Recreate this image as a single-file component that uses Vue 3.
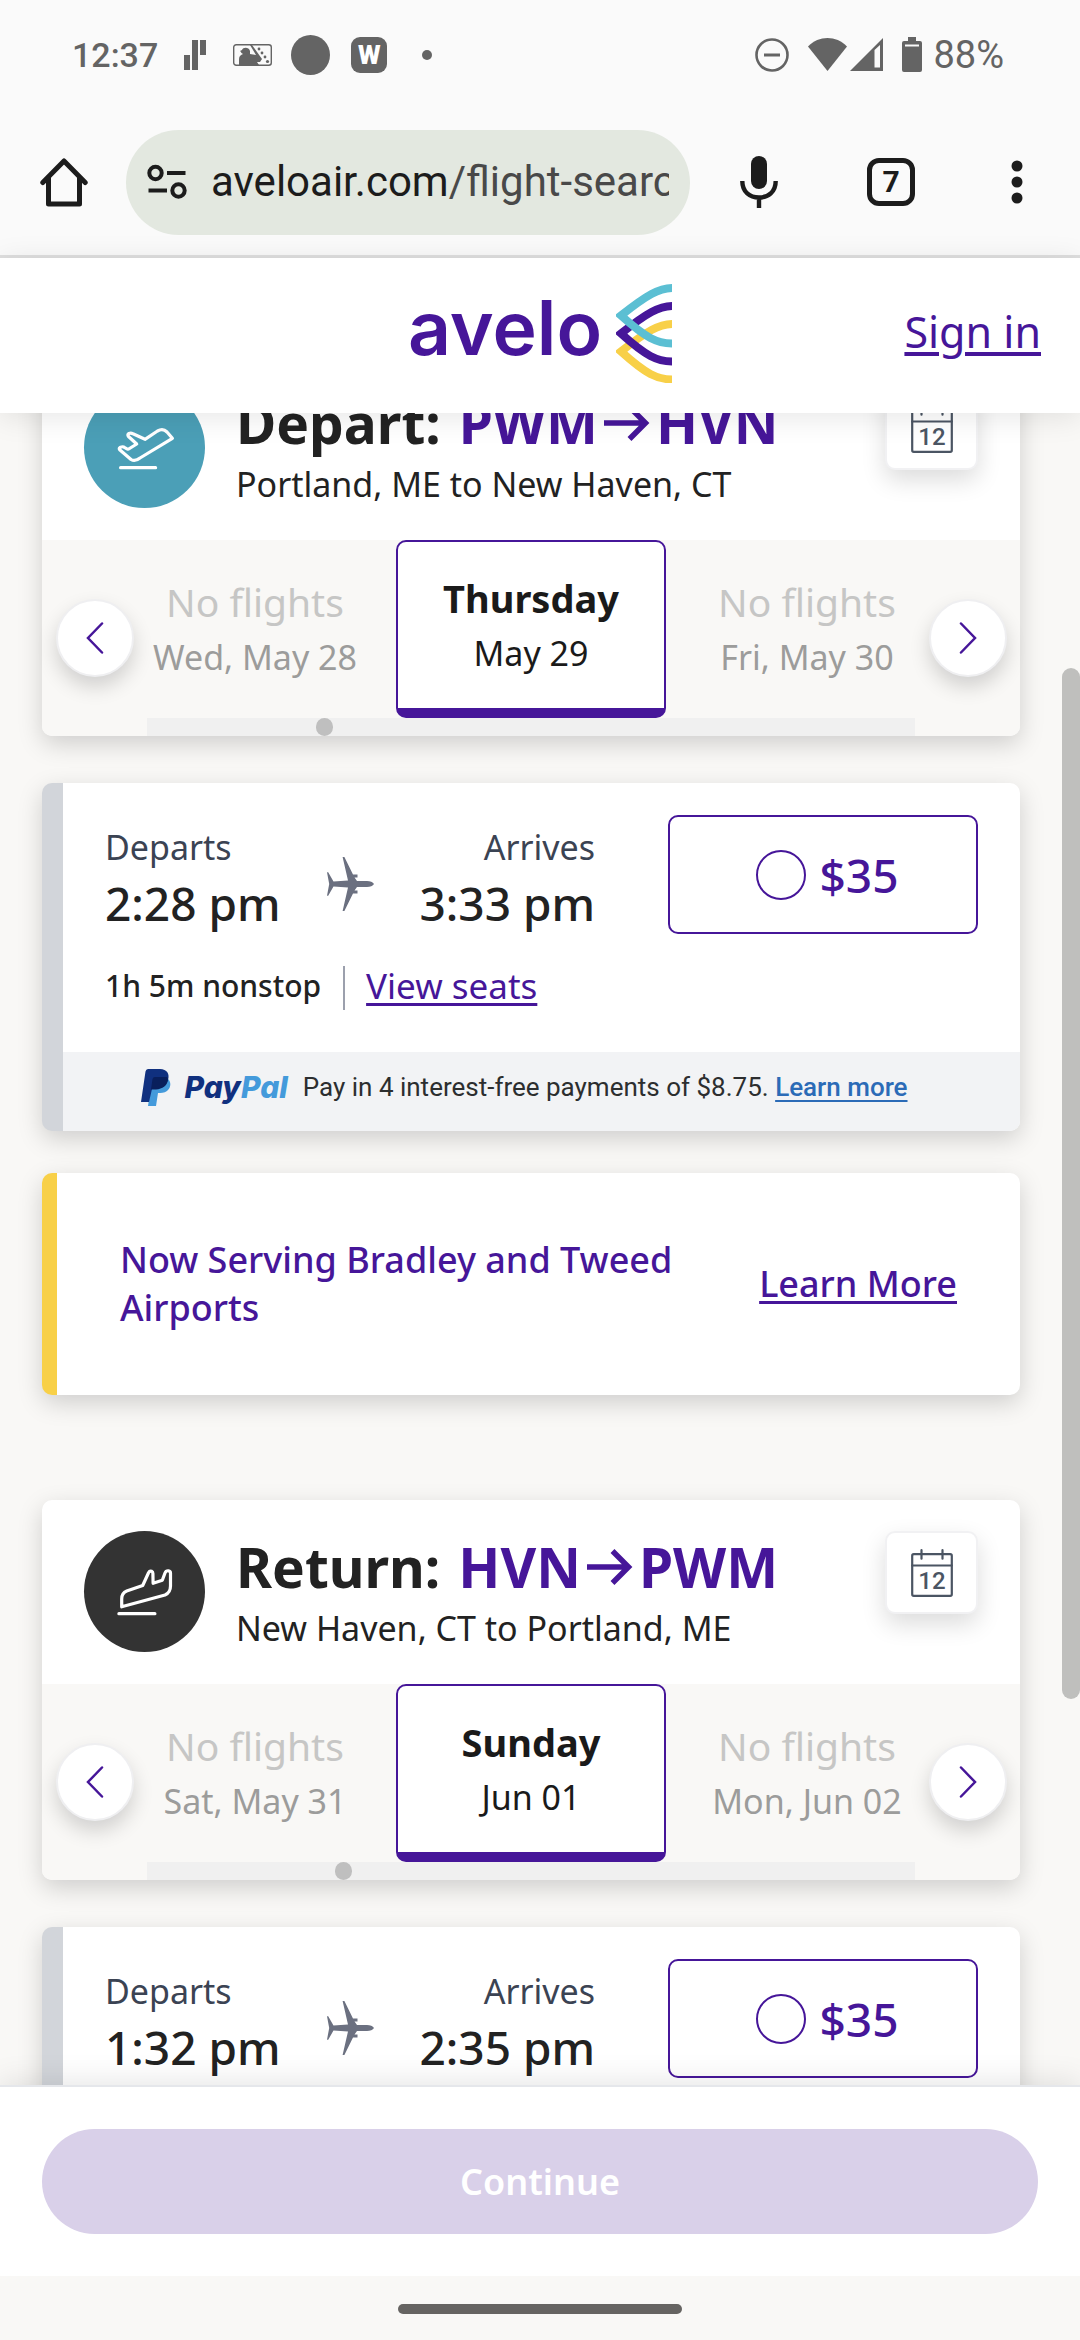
<script setup>
import { ref } from 'vue'

const trips = [
  {
    id: 'depart',
    label: 'Depart:',
    from: 'PWM',
    to: 'HVN',
    cities: 'Portland, ME to New Haven, CT',
    days: [
      { title: 'No flights', date: 'Wed, May 28' },
      { title: 'Thursday', date: 'May 29', selected: true },
      { title: 'No flights', date: 'Fri, May 30' }
    ],
    thumb: 22,
    flight: { departs: '2:28 pm', arrives: '3:33 pm', duration: '1h 5m nonstop', price: '$35', installment: '$8.75' },
    notice: 'Now Serving Bradley and Tweed Airports'
  },
  {
    id: 'return',
    label: 'Return:',
    from: 'HVN',
    to: 'PWM',
    cities: 'New Haven, CT to Portland, ME',
    days: [
      { title: 'No flights', date: 'Sat, May 31' },
      { title: 'Sunday', date: 'Jun 01', selected: true },
      { title: 'No flights', date: 'Mon, Jun 02' }
    ],
    thumb: 24.5,
    flight: { departs: '1:32 pm', arrives: '2:35 pm', duration: '1h 3m nonstop', price: '$35', installment: '$8.75' }
  }
]

const chosen = ref({ depart: null, return: null })
</script>

<template>
  <div class="screen">
    <div class="status">
      <span class="clock">12:37</span>
      <svg class="s-bars" width="22" height="30" viewBox="0 0 22 30"><path d="M0 15h6v15H0zM8 0h6v30H8zM16 0h6v15h-6z" /></svg>
      <svg class="s-ball" width="39" height="22" viewBox="0 0 39 22">
        <rect x="0.7" y="0.7" width="37.6" height="20.6" rx="2.5" fill="none" stroke="#646464" stroke-width="1.4" />
        <path d="M6 21v-6c0-3 2-4 4-5-2-1-2-2-2-2l-1-1 2-1c1-3 7-3 8 1v3l6 1-6-10h2l10 14-2 3h-3l2 3z" />
        <circle cx="26" cy="5" r="1.4" /><circle cx="29" cy="9" r="1.4" /><circle cx="32" cy="13" r="1.4" /><circle cx="34.5" cy="17.5" r="1.6" />
      </svg>
      <svg class="s-disc" width="39" height="40" viewBox="0 0 39 40"><ellipse cx="19.5" cy="20" rx="19.5" ry="20" /></svg>
      <span class="s-w">W</span>
      <svg class="s-dot" width="10" height="10" viewBox="0 0 10 10"><circle cx="5" cy="5" r="5" /></svg>
      <span class="spacer"></span>
      <svg class="s-dnd" width="34" height="34" viewBox="0 0 34 34"><circle cx="17" cy="17" r="15.5" fill="none" stroke="#646464" stroke-width="2.6" /><path d="M9 15.5h16v3H9z" /></svg>
      <svg class="s-wifi" width="39" height="33" viewBox="0 0 39 33"><path d="M0 8.500C11-2.800 28-2.800 39 8.500L19.500 33z" /></svg>
      <svg class="s-cell" width="33" height="33" viewBox="0 0 33 33"><path fill-rule="evenodd" d="M33 0v33H0zM24.500 12v17.500H30V7z" /></svg>
      <svg class="s-batt" width="20" height="35" viewBox="0 0 20 35"><path fill-rule="evenodd" d="M6 0h8v4h4a2 2 0 0 1 2 2v27a2 2 0 0 1-2 2H2a2 2 0 0 1-2-2V6a2 2 0 0 1 2-2h4zM3 7.500v2h14v-2z" /></svg>
      <span class="pct">88%</span>
    </div>

    <div class="toolbar">
      <button class="tool" aria-label="Home">
        <svg width="48" height="49" viewBox="0 0 48 49" fill="none" stroke="#1c1c1c" stroke-width="5" stroke-linejoin="round" stroke-linecap="round"><path d="M2.800 24.500 24 3l21.200 21.500" /><path d="M8.500 20v26h31V20" /></svg>
      </button>
      <button class="omnibox">
        <svg width="40" height="36" viewBox="0 0 40 36" fill="none" stroke="#1c1c1c" stroke-width="4"><circle cx="8.500" cy="9" r="6.200" /><path d="M20 9h18.500M1.500 26.500H20" /><circle cx="31.500" cy="26.500" r="6.200" /></svg>
        <span class="url">aveloair.com<span class="path">/flight-search</span></span>
      </button>
      <button class="tool mic" aria-label="Voice search">
        <svg width="38" height="52" viewBox="0 0 38 52"><rect x="11" y="0" width="16" height="33" rx="8" fill="#1c1c1c" /><path d="M2.300 25c0 11 7.500 16.500 16.700 16.500S35.700 36 35.700 25M19 41v11" fill="none" stroke="#1c1c1c" stroke-width="4.400" /></svg>
      </button>
      <button class="tool tabs" aria-label="Tabs"><span>7</span></button>
      <button class="tool more" aria-label="More options">
        <svg width="12" height="44" viewBox="0 0 12 44"><circle cx="6" cy="6" r="5.500" /><circle cx="6" cy="22" r="5.500" /><circle cx="6" cy="38" r="5.500" /></svg>
      </button>
    </div>

    <div class="page">
      <header class="site">
        <a class="logo" href="#" aria-label="Avelo home">
          <span class="word">avelo</span>
          <svg width="56" height="99" viewBox="0 0 56 99" fill="none" stroke-width="8">
            <path stroke="#f8d048" d="M57 40C43 40 31 47 5 67.500C30 90 41 95.500 57 95.500" />
            <path stroke="#461699" d="M57 22C43 22 31 29 5 49.500C30 72 41 77.500 57 77.500" />
            <path stroke="#5bbfd3" d="M57 4C43 4 31 11 5 31.500C30 54 41 59.500 57 59.500" />
          </svg>
        </a>
        <a class="signin" href="#">Sign in</a>
      </header>

      <main>
        <div class="content">
          <section v-for="trip in trips" :key="trip.id" class="trip">
            <div class="card search">
              <div class="head">
                <span class="badge" :class="trip.id">
                  <svg width="64" height="48" viewBox="0 0 64 48" fill="none" stroke="#fff" stroke-width="3.200" stroke-linecap="round" stroke-linejoin="round">
                    <path v-if="trip.id === 'depart'" d="M7 23.500q3-1.500 4.500 0l2 1.200q1.500.8 3-.2L23.700 20l-8.200-7.500q-1.500-2 .5-3 2-.8 4 .3L32 15.300 44.500 7q5.500-3 9.500 1l5.400 6.300L27 34q-5 4-9 1.500L7 26q-1.500-1.500 0-2.500zM7.600 43.700h35" />
                    <path v-else d="M8.700 38.800V31q0-6 5-8l16-5.500L35.200 5.500q1.200-3 3.500-2.200 1.200.5 1.200 2.200l.2 9.800 9.200-3L52 5q1-2.500 3.500-2.200 2 .3 2 2.200v13q0 6.500-5.500 9zM5.900 45.700h36" />
                  </svg>
                </span>
                <div class="titles">
                  <h2>{{ trip.label }}
                    <span class="route">{{ trip.from }}
                      <svg width="46" height="36" viewBox="0 0 46 36" fill="none" stroke="#461699" stroke-width="5.500"><path d="M0 18h42M25.500 2 41.500 18l-16 16" /></svg>
                      {{ trip.to }}</span>
                  </h2>
                  <p>{{ trip.cities }}</p>
                </div>
                <button class="calendar" aria-label="Open calendar">
                  <svg width="42" height="48" viewBox="0 0 42 48" fill="none" stroke="#4b5563" stroke-width="2.200" stroke-linecap="round">
                    <rect x="1.200" y="5.200" width="39.600" height="41.600" rx="1.500" /><path d="M1.200 16.500h39.600M10.500 1.200v8.500M31.500 1.200v8.500" />
                    <text x="21" y="40" text-anchor="middle" stroke="none" fill="#4b5563">12</text>
                  </svg>
                </button>
              </div>
              <div class="dates">
                <button class="round" aria-label="Earlier dates"><svg width="18" height="32" viewBox="0 0 18 32"><path d="M16 1.500 2 16l14 14.500" /></svg></button>
                <div class="window">
                  <div class="strip">
                    <button v-for="day in trip.days" :key="day.date" class="day" :class="{ selected: day.selected }">
                      <span class="title">{{ day.title }}</span>
                      <span class="date">{{ day.date }}</span>
                    </button>
                  </div>
                  <div class="track"><span class="thumb" :style="{ marginLeft: trip.thumb + '%' }"></span></div>
                </div>
                <button class="round" aria-label="Later dates"><svg width="18" height="32" viewBox="0 0 18 32"><path d="m2 1.500 14 14.500L2 30.500" /></svg></button>
              </div>
            </div>

            <article class="card flight">
              <div class="summary">
                <div class="times">
                  <div><span class="when">Departs</span><span class="hour">{{ trip.flight.departs }}</span></div>
                  <svg width="47" height="54" viewBox="0 0 47 54" fill="#6b7080"><path d="M47 27c-1-2-4-2.800-7-3H30l-2.500-3.500h3v-3H26L17.400 0h-1.800L21 23.500 6.500 24.500 1.200 15.300H0L2.200 27 0 38.700h1.200l5.300-9.200 14.500 1L15.600 54h1.800L26 36.500h4.500v-3h-3L30 30h10c3-.2 6-1 7-3z" /></svg>
                  <div class="right"><span class="when">Arrives</span><span class="hour">{{ trip.flight.arrives }}</span></div>
                </div>
                <label class="price"><input v-model="chosen[trip.id]" type="radio" :name="trip.id" :value="trip.flight.price" />{{ trip.flight.price }}</label>
              </div>
              <div class="details">
                <span class="duration">{{ trip.flight.duration }}</span>
                <a href="#">View seats</a>
              </div>
              <div class="paypal">
                <svg width="30" height="37" viewBox="0 0 30 37"><path fill="#449adb" d="M27 10c3.500 3 3 9-1 12-3 2-6 2-9 2l-2 13H7l4-27z" /><path fill="#10307f" d="M7 0h12c7 0 10 5 8 11-2 7-8 9-16 9l-3 13H0L4.500 2.500Q5 0 7 0z" /><path fill="#091f5c" d="M11.500 10q.4-2 2.500-2h12c1 1 1.200 3 .4 5-2 6-8 8-16.400 7.500z" /></svg>
                <span class="brand">Pay<span>Pal</span></span>
                <span class="offer">Pay in 4 interest-free payments of {{ trip.flight.installment }}. <a href="#">Learn more</a></span>
              </div>
            </article>

            <aside v-if="trip.notice" class="card notice">
              <p>{{ trip.notice }}</p>
              <a href="#">Learn More</a>
            </aside>
          </section>
        </div>
      </main>

      <div class="scrollbar"></div>
    </div>

    <div class="footer"><button disabled>Continue</button></div>
    <div class="gesture"><span></span></div>
  </div>
</template>

<style>
body { background: #f9f8f6; }
</style>

<style scoped>
* { box-sizing: border-box; }
button { padding: 0; border: 0; background: none; font: inherit; color: inherit; }
svg { display: block; flex: none; }
p, h2 { margin: 0; }

.screen {
  display: flex;
  flex-direction: column;
  height: 100vh;
  overflow: hidden;
  font-family: "Noto Sans", "Open Sans", sans-serif;
  color: #222;
}

.status {
  display: flex;
  flex: none;
  align-items: center;
  height: 109px;
  padding: 0 76px 0 72px;
  background: #fafafa;
  color: #646464;
  fill: #646464;
  font: 500 38px/40px Roboto, sans-serif;
}
.clock { font-size: 34px; }
.s-bars { margin-left: 26px; }
.s-ball { margin-left: 27px; }
.s-disc { margin-left: 19px; }
.s-w {
  width: 36px;
  margin-left: 21px;
  border-radius: 9px;
  background: #646464;
  color: #fff;
  font-size: 26px;
  font-weight: 900;
  line-height: 36px;
  text-align: center;
}
.s-dot { margin-left: 35px; }
.spacer { flex: 1; }
.s-wifi { margin-left: 19px; }
.s-cell { margin-left: 3px; }
.s-batt { margin-left: 19px; }
.pct { margin-left: 11px; font-weight: 400; }

.toolbar {
  display: flex;
  flex: none;
  align-items: center;
  height: 149px;
  padding: 0 57px 0 40px;
  border-bottom: 3px solid #dfdfdf;
  background: #fafafa;
}
.omnibox {
  display: flex;
  flex: 1;
  align-items: center;
  gap: 24px;
  min-width: 0;
  height: 105px;
  margin: 0 50px 0 38px;
  padding: 0 21px;
  border-radius: 53px;
  background: #e3e8e0;
  font: 42px/60px Roboto, sans-serif;
  color: #1c1c1c;
}
.url { flex: 1; min-width: 0; overflow: hidden; white-space: nowrap; text-align: left; }
.path { color: #494949; }
.tabs {
  width: 48px;
  height: 48px;
  margin: 0 96px 0 89px;
  border: 5px solid #1c1c1c;
  border-radius: 12px;
  font: 700 30px/38px Roboto, sans-serif;
  color: #1c1c1c;
}
.more { fill: #1c1c1c; }

.page { position: relative; display: flex; flex: 1; flex-direction: column; min-height: 0; }
.site {
  position: relative;
  z-index: 2;
  display: grid;
  flex: none;
  grid-template-columns: 1fr auto 1fr;
  align-items: center;
  height: 155px;
  padding: 0 39px 4px;
  background: #fff;
  box-shadow: 0 4px 28px rgba(0, 0, 0, 0.1);
}
.logo { display: flex; grid-column: 2; align-items: center; gap: 14px; color: #461699; text-decoration: none; }
.word { padding-bottom: 12px; font: 600 75px/80px Inter, sans-serif; }
.signin {
  justify-self: end;
  padding-bottom: 4px;
  color: #461699;
  font-size: 43px;
  line-height: 60px;
  text-decoration-thickness: 4px;
  text-underline-offset: 4px;
}

main { flex: 1; min-height: 0; overflow: hidden; background: #f9f8f6; }
.content { display: flex; flex-direction: column; gap: 105px; margin: -57px 60px 0 42px; }
.card { border-radius: 10px; background: #fff; box-shadow: 0 8px 24px rgba(0, 0, 0, 0.17); }

.head { display: flex; align-items: flex-start; height: 184px; padding: 31px 42px 32px; }
.badge { display: flex; flex: none; align-items: center; justify-content: center; width: 121px; height: 121px; border-radius: 50%; }
.depart { background: #4b9fb7; }
.return { background: #333; }
.titles { flex: 1; min-width: 0; padding: 2px 0 0 31px; white-space: nowrap; }
h2 { display: flex; gap: 18px; font-size: 55px; font-weight: 700; line-height: 68px; }
.route { display: flex; align-items: center; gap: 6px; color: #461699; }
.titles p { font-size: 34px; line-height: 54px; }
.calendar {
  display: flex;
  flex: none;
  align-items: center;
  justify-content: center;
  width: 93px;
  height: 83px;
  border: 2px solid #f1f1f3;
  border-radius: 10px;
  background: #fff;
  box-shadow: 0 10px 24px rgba(0, 0, 0, 0.14);
}
.calendar text { font: 500 24px Roboto, sans-serif; }

.dates {
  display: grid;
  grid-template-columns: 105px 1fr 105px;
  align-items: center;
  justify-items: center;
  border-radius: 0 0 10px 10px;
  background: #f9f8f6;
}
.round {
  display: flex;
  align-items: center;
  justify-content: center;
  width: 78px;
  height: 78px;
  border: 2px solid #efeff1;
  border-radius: 50%;
  background: #fff;
  box-shadow: 0 10px 20px rgba(0, 0, 0, 0.16);
}
.round path { fill: none; stroke: #461699; stroke-width: 2.5; stroke-linecap: round; }
.window { width: 100%; overflow: hidden; }
.strip { display: flex; justify-content: center; gap: 6px; }
.day { display: flex; flex: none; flex-direction: column; align-items: center; width: 270px; height: 178px; padding-top: 32px; color: #9c9c9b; }
.title { font-size: 39px; line-height: 60px; color: #c6c6c5; }
.date { font-size: 34px; line-height: 50px; }
.selected { padding-top: 26px; border: 2px solid #461699; border-bottom-width: 10px; border-radius: 10px; background: #fff; color: #1a1a1a; }
.selected .title { color: #1a1a1a; font-size: 38px; font-weight: 700; }
.track { display: flex; height: 18px; background: #f0f0f0; }
.thumb { width: 17px; border-radius: 9px; background: #bfbfbf; }

.flight { margin-top: 47px; overflow: hidden; border-left: 21px solid #d2d5da; }
.summary { display: flex; align-items: flex-end; justify-content: space-between; padding: 32px 42px 32px; }
.times { display: flex; align-items: center; gap: 46px; }
.times div { display: flex; flex-direction: column; }
.times svg { margin-top: 12px; }
.right { text-align: right; }
.when { font-size: 34px; line-height: 50px; color: #3b4353; }
.hour { font-size: 46px; font-weight: 500; line-height: 62px; }
.price {
  display: flex;
  align-items: center;
  justify-content: center;
  gap: 14px;
  width: 310px;
  height: 119px;
  padding-left: 8px;
  border: 2px solid #461699;
  border-radius: 10px;
  color: #461699;
  font-size: 46px;
  font-weight: 500;
}
.price input { width: 50px; height: 50px; margin: 0; border: 2px solid #461699; border-radius: 50%; appearance: none; }
.details { display: flex; align-items: flex-start; height: 86px; padding: 0 42px; line-height: 40px; }
.duration { height: 44px; padding-right: 22px; border-right: 2px solid #9ca0ad; font-size: 30px; font-weight: 500; }
.details a { margin-left: 21px; color: #461699; font-size: 35px; text-decoration-thickness: 3px; text-underline-offset: 4px; }
.paypal { display: flex; align-items: center; justify-content: center; height: 79px; padding: 0 34px 9px 0; background: #f2f3f5; white-space: nowrap; }
.brand { margin-left: 13px; color: #10307f; font: italic 800 30px/40px Inter, sans-serif; }
.brand span { color: #449adb; }
.offer { margin-left: 15px; color: #2c2e2f; font: 26px/40px Roboto, sans-serif; }
.offer a { color: #2b6bb7; font-weight: 500; text-decoration-thickness: 2px; text-underline-offset: 4px; }

.notice {
  display: flex;
  align-items: center;
  justify-content: space-between;
  gap: 60px;
  height: 222px;
  margin-top: 42px;
  padding: 0 63px;
  border-left: 15px solid #f8d048;
  color: #461699;
  font-size: 36px;
  font-weight: 500;
  line-height: 48px;
}
.notice a { flex: none; color: inherit; text-decoration-thickness: 3px; text-underline-offset: 4px; }

.scrollbar { position: absolute; top: 410px; right: 0; z-index: 1; width: 18px; height: 1031px; border-radius: 9px; background: #bfbfbd; }

.footer {
  position: relative;
  z-index: 2;
  flex: none;
  padding: 42px;
  border-top: 2px solid #e5e7eb;
  background: #fff;
  box-shadow: 0 -4px 28px rgba(0, 0, 0, 0.1);
}
.footer button { display: block; width: 100%; height: 105px; border-radius: 53px; background: #d9d0e9; color: #fff; font-size: 36px; font-weight: 600; }
.gesture { position: relative; z-index: 2; display: flex; flex: none; justify-content: center; height: 64px; padding-top: 28px; background: #f9f8f6; }
.gesture span { width: 284px; height: 10px; border-radius: 5px; background: #666462; }
</style>
